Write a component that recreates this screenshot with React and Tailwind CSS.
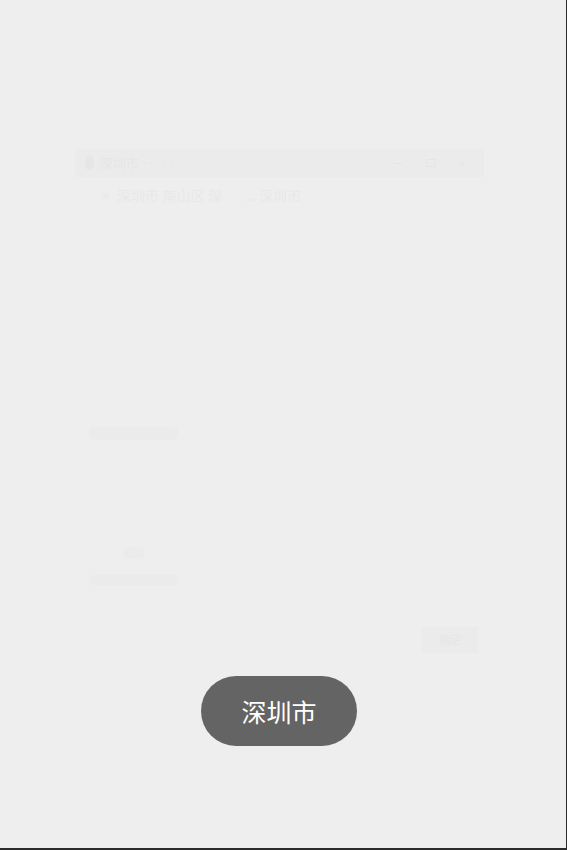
import React from "react";

export default function App() {
  return (
    <div className="relative box-content w-[566px] h-[848px] bg-[#eeeeee] border-r border-b-2 border-[#2b2b2b] overflow-hidden font-['Noto_Sans','Noto_Sans_CJK_SC',sans-serif]">
      <div className="flex flex-col pt-[149px] pl-[75px]">
        {/* faint search bar */}
        <div className="flex items-center w-[409px] h-[28px] bg-[#ebebeb] px-[10px] gap-[6px]">
          <div className="w-[9px] h-[14px] rounded-full bg-[#e6e6e6]" />
          <span className="text-[13px] text-[#e6e6e6] leading-none">深圳市 · · · ·  ·  ·  ·</span>
          <div className="flex-1" />
          <div className="w-[8px] h-[1px] bg-[#e5e5e5] mr-[18px]" />
          <div className="w-[10px] h-[8px] border border-[#e5e5e5] mr-[18px]" />
          <div className="w-[8px] h-[8px] text-[9px] text-[#e5e5e5] leading-none mr-[6px]">×</div>
        </div>
        {/* faint text row */}
        <div className="mt-[12px] ml-[28px] flex items-center gap-[8px] text-[14px] text-[#e8e8e8] leading-none">
          <span className="w-[6px] h-[6px] rounded-full bg-[#eaeaea]" />
          <span>深圳市 南山区 深</span>
          <span className="ml-[14px]">… 深圳市</span>
        </div>
        {/* faint pill */}
        <div className="mt-[224px] ml-[14px] w-[89px] h-[13px] rounded-[6px] bg-[#ebebeb]" />
        {/* faint badge */}
        <div className="mt-[107px] ml-[48px] w-[22px] h-[12px] rounded-full bg-[#ebebeb]" />
        {/* faint pill 2 */}
        <div className="mt-[16px] ml-[14px] w-[89px] h-[10px] rounded-[6px] bg-[#ebebeb]" />
        {/* faint button */}
        <div className="mt-[42px] ml-[347px] w-[56px] h-[26px] bg-[#ebebeb] flex items-center justify-center text-[11px] text-[#e6e6e6]">
          确定
        </div>
      </div>

      {/* toast */}
      <div className="absolute left-[201px] top-[676px] w-[156px] h-[70px] rounded-full bg-[#646464] flex items-center justify-center">
        <span className="text-white text-[25px] leading-none font-['Noto_Sans_CJK_SC',sans-serif]">深圳市</span>
      </div>
    </div>
  );
}
